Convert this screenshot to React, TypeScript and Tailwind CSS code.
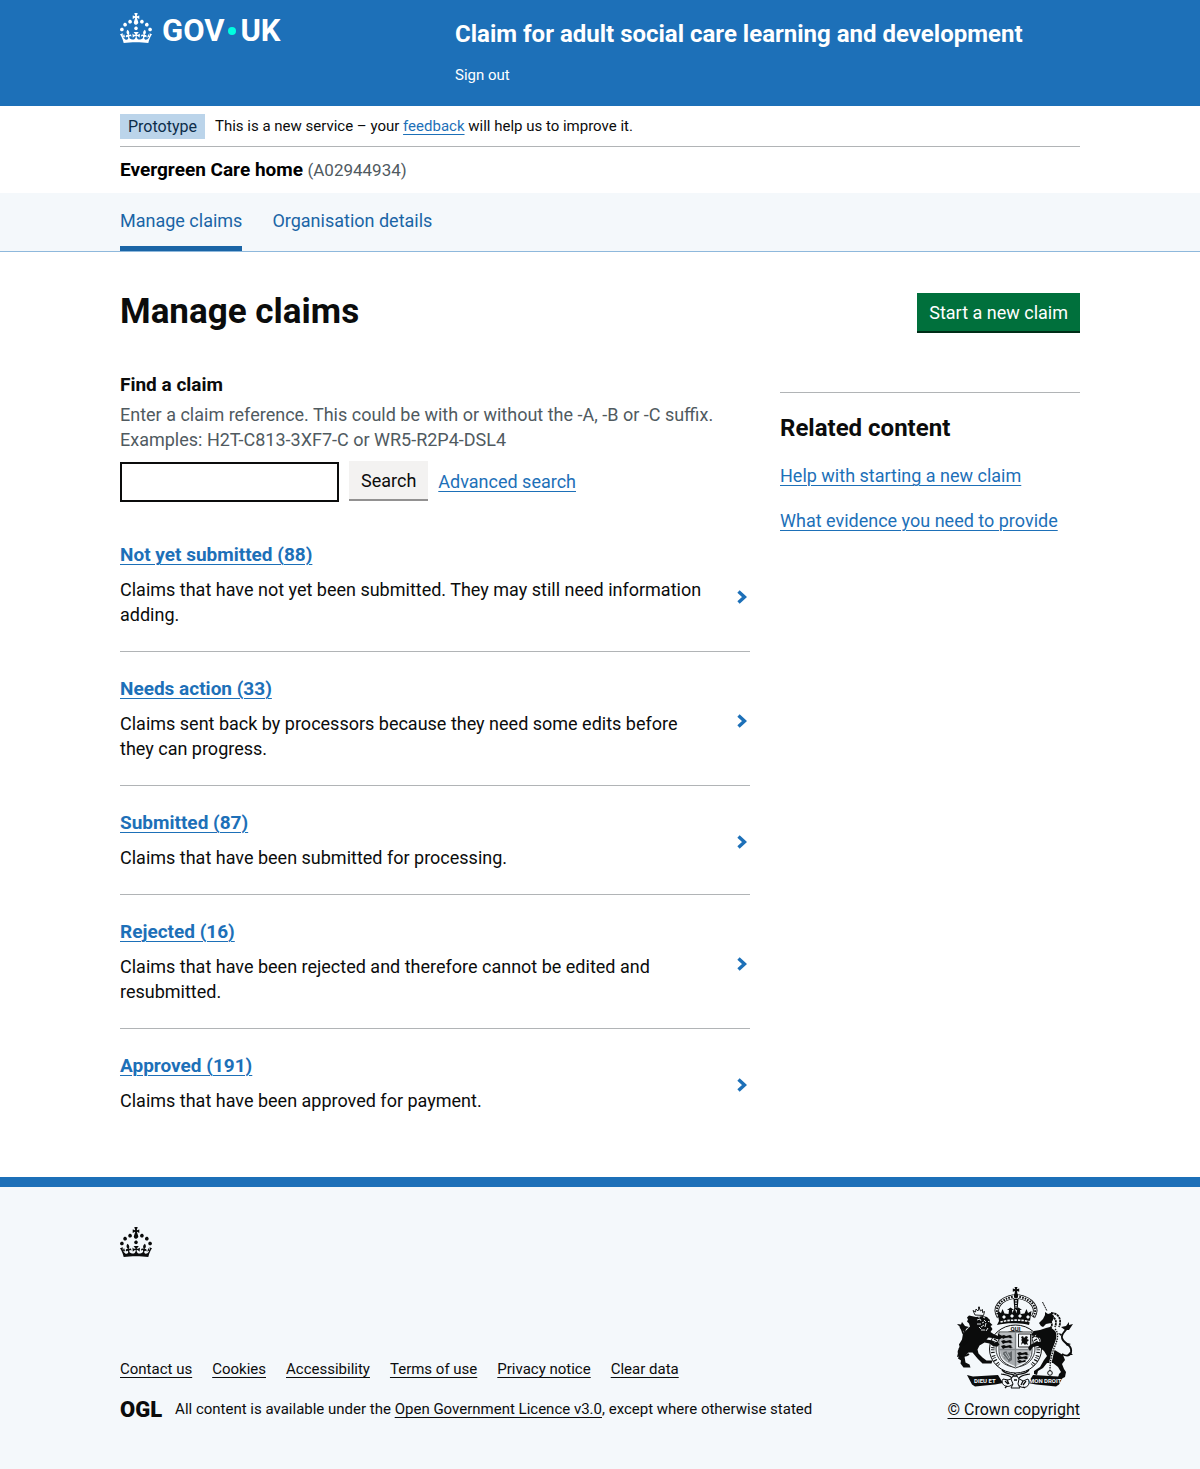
import React from "react";

const CROWN =
  "M22.6 10.4c-1 .4-2-.1-2.4-1-.4-.9.1-2 1-2.4.9-.4 2 .1 2.4 1s-.1 2-1 2.4m-5.9 6.7c-.9.4-2-.1-2.4-1-.4-.9.1-2 1-2.4.9-.4 2 .1 2.4 1s-.1 2-1 2.4m10.8-3.7c-1 .4-2-.1-2.4-1-.4-.9.1-2 1-2.4.9-.4 2 .1 2.4 1s0 2-1 2.4m3.3 4.8c-1 .4-2-.1-2.4-1-.4-.9.1-2 1-2.4.9-.4 2 .1 2.4 1s-.1 2-1 2.4M17 4.7l2.3 1.2V2.5l-2.3.7-.2-.2.9-3h-3.4l.9 3-.2.2c-.1.1-2.3-.7-2.3-.7v3.4L15 4.7c.1.1.1.2.2.2l-1.3 4c-.1.2-.1.4-.1.6 0 1.1.8 2 1.9 2.2h.7c1-.2 1.9-1.1 1.9-2.1 0-.2 0-.4-.1-.6l-1.3-4c-.1-.2 0-.2.1-.3m-7.6 5.7c.9.4 2-.1 2.4-1 .4-.9-.1-2-1-2.4-.9-.4-2 .1-2.4 1s0 2 1 2.4m-5 3c.9.4 2-.1 2.4-1 .4-.9-.1-2-1-2.4-.9-.4-2 .1-2.4 1s.1 2 1 2.4m-3.2 4.8c.9.4 2-.1 2.4-1 .4-.9-.1-2-1-2.4-.9-.4-2 .1-2.4 1s0 2 1 2.4m14.8 11c4.4 0 8.6.3 12.3.8 1.1-4.5 2.4-7 3.7-8.8l-2.5-.9c.2 1.3.3 1.9 0 2.7-.4-.4-.8-1.1-1.1-2.3l-1.2 4c.7-.5 1.3-.8 2-.9-1.1 2.5-2.6 3.1-3.5 3-1.1-.2-1.7-1.2-1.5-2.1.3-1.2 1.5-1.5 2.1-.1 1.1-2.3-.8-3-2-2.3 1.9-1.9 2.1-3.5.6-5.6-2.1 1.6-2.1 3.2-1.2 5.5-1.2-1.4-3.2-.6-2.5 1.6.9-1.4 2.1-.5 1.9.8-.2 1.1-1.7 2.1-3.5 1.9-2.7-.2-2.9-2.1-2.9-3.6.7-.1 1.9.5 2.9 1.9l.4-4.3c-1.1 1.1-2.1 1.4-3.2 1.4.4-1.2 2.1-3 2.1-3h-5.4s1.7 1.9 2.1 3c-1.1 0-2.1-.2-3.2-1.4l.4 4.3c1-1.4 2.2-2 2.9-1.9-.1 1.5-.2 3.4-2.9 3.6-1.9.2-3.4-.8-3.5-1.9-.2-1.3 1-2.2 1.9-.8.7-2.3-1.2-3-2.5-1.6.9-2.2.9-3.9-1.2-5.5-1.5 2-1.3 3.7.6 5.6-1.2-.7-3.1 0-2 2.3.6-1.4 1.8-1.1 2.1.1.2.9-.3 1.9-1.5 2.1-.9.2-2.4-.5-3.5-3 .6 0 1.2.3 2 .9l-1.2-4c-.3 1.1-.7 1.9-1.1 2.3-.3-.8-.2-1.4 0-2.7l-2.9.9C1.3 23 2.6 25.5 3.7 30c3.7-.5 7.9-.8 12.3-.8";

function Crown() {
  return (
    <svg viewBox="0 0 32 30" className="h-[30px] w-8 shrink-0" fill="currentColor" aria-hidden="true">
      <path fillRule="evenodd" clipRule="evenodd" d={CROWN} />
    </svg>
  );
}

const PAPER = "#f4f8fb";
const INK = "#0b0c0c";

function RoyalArms() {
  return (
    <svg viewBox="0 0 116 102" className="h-[102px] w-[116px]" fill={INK} stroke="none" aria-hidden="true">
      {/* crown */}
      <path d="M57.5 0h3l-.7 2.2 2.4-.7v3.2l-2.2-.6.5 3h-3l.5-3-2.2.6V1.5l2.4.7z" />
      <circle cx="59" cy="9" r="2.4" />
      <path d="M42 30C36 21 43 12 57 9.5M76 30C82 21 75 12 61 9.5" fill="none" stroke={INK} strokeWidth="4.5" />
      <path d="M42 30C36 21 43 12 57 9.5M76 30C82 21 75 12 61 9.5" fill="none" stroke={PAPER} strokeWidth="2.8" />
      <path d="M42 30C36 21 43 12 57 9.5M76 30C82 21 75 12 61 9.5" fill="none" stroke={INK} strokeWidth="2" strokeDasharray="1.6 1.2" />
      <path d="M56.5 12h5l-.8 10h-3.4z" />
      <path d="M59 13v8" stroke={PAPER} strokeWidth="1.5" strokeDasharray="1.5 1" />
      <path d="M42 34l-1.5-10 3.5 2 1.5-4 2 4.5 4 .5.5-4h-2l3.5-2.5 3.5 2.5h-2l.5 3 2-5 2 5 .5-3h-2l3.5-2.5 3.5 2.5h-2l.5 4 4-.5 2-4.500 1.5 4 3.5-2-1.5 10-1 4c-9-2.500-23-2.500-32 0z" />
      <path d="M45 30l2-2 2 2-2 2zM53 29l2-2 2 2-2 2zM61 29l2-2 2 2-2 2zM69 30l2-2 2 2-2 2z" fill={PAPER} />
      <path d="M43.5 35c9-2.5 22-2.5 31 0" fill="none" stroke={PAPER} strokeWidth="1.6" strokeDasharray="2.5 1" />

      {/* garter */}
      <ellipse cx="58.5" cy="62" rx="26" ry="24" fill={PAPER} stroke={INK} strokeWidth="1" />
      <path d="M44 45C34 54 33 68 42 77M73 45C83 54 84 68 75 77" fill="none" stroke={INK} strokeWidth="3.6" strokeDasharray="1 1.2 .8 1.6 1.2 2.5" transform="translate(0 1)" />
      <ellipse cx="58.5" cy="62" rx="19.5" ry="18" fill={PAPER} stroke={INK} strokeWidth=".8" />
      <text x="58.5" y="43.5" textAnchor="middle" fontSize="6" fontWeight="700">
        QUI
      </text>

      {/* shield */}
      <path d="M42 45h33v19c0 10-8 14-16.5 17C50 78 42 74 42 64z" fill={PAPER} stroke={INK} strokeWidth=".8" />
      <path d="M43 46h15v16H43z" fill="#b9bdc0" />
      <path d="M59 63h15c0 9-7 13-15 16z" fill="#b9bdc0" />
      <path d="M43 63h15v16C50 76 43 72 43 63z" fill="#a9adb0" />
      <path d="M58.5 45v35M42 62.5h33" stroke="#83888b" strokeWidth="1.4" />
      <path d="M44 49l3-1 2 1 4-1 2 1-1 1 2 1-3 .2-1-.7-4 .5-2 1zM44 54l3-1 2 1 4-1 2 1-1 1 2 1-3 .2-1-.7-4 .5-2 1zM44 59l3-1 2 1 4-1 2 1-1 1 2 1-3 .2-1-.7-4 .5-2 1z" />
      <path d="M60 66l3-1 2 1 4-1 2 1-1 1 2 1-3 .2-1-.7-4 .5-2 1zM60 70l3-1 2 1 4-1 2 1-1 1 1 1-3 .2-1-.7-4 .5-2 1zM60 74l3-1 2 1 3-1 1 1-1 1-3 .2-3 1z" />
      <path d="M61.5 47h12v13h-12z" fill={PAPER} stroke={INK} strokeWidth=".9" />
      <path d="M64 50l2-1 1 2 2-2 2 1-1 2 2 1-2 2 1 3-2-1-1 1-2-2-2 2 1-4-1-1 1-1z" />
      <path d="M46 66c1-2 4-2 6 0l3-2v9l-3 2-5-4z" fill="#606568" />
      <path d="M48 66l4 6M50 65l3 6M46 68l5 6" stroke={PAPER} strokeWidth=".6" />

      {/* lion */}
      <path d="M18 28l-2-4.5 2.5 1.5.5-3 2 2 1-3.5 1.5 3.5 2-1.500v3l2-1-1 4z" fill={PAPER} stroke={INK} strokeWidth=".9" />
      <circle cx="22" cy="20.5" r=".9" />
      <path d="M19 30l7-1 4 1 3 3-.5 2 3 3-2 1 2 3-2 3 3 2 4 2 1-2 3 1.5 1 2-3 2-3-.5-4-1-4-.5-2 2 6 1 2 2 3-1 2 3-2 2-4 0-4-3-5-1-5 3-2 4 1 4 4 4 4 3 6 0-1 3-9 0-5-5-5-6-4 0-4 4 1 6 4 2 1 3-7 0-3-4 .5-3-3-2 1-3-1-3 2-4-1-4 3-5 1-6 4-4 3-3-1-3-2-2 1-2-1-2 2-2z" />
      <path d="M20 33l3-1 1 2M20 37l4 0M24 40l3-2M27 33l2 2M29 36l-1 4M24 43l4 0M31 41l-2 3M26 30l2 1M21 30h2M31 34l1 1M22 40l2 2M25 36l2-1" fill="none" stroke={PAPER} strokeWidth=".9" />
      <path d="M12 67C7 71 0 68 2 63c1-4 6-6 8-9 2-5-2-5-4-8-1-3-1-5-3-6" fill="none" stroke={INK} strokeWidth="1.8" />
      <path d="M4 41l-4-4 4 .5L5 35l3 4 4 1-3 2-1 4zM7 56l-5 1 3 2zM1 66l-1 4 5-1z" />

      {/* unicorn */}
      <path d="M85.5 15l4.5 9" stroke={INK} strokeWidth="1" strokeDasharray="2 .5" />
      <path d="M84 39l-2-3L86 32l2-4 0-3 3 2 3-1 3 3-1 4-2 3-5 1-3 3z" />
      <path d="M94 26c8 0 11 7 8 14M94 29c5 2 6 6 4 11M93 34c3 3 2 5 0 8" fill="none" stroke={INK} strokeWidth="1.8" strokeDasharray="2.5 .6" />
      <path d="M83 43l6-2 4-1 4 3 4 3 0 7-3 6-2 3 5 3 5 3 2 5-3 4 2 5 2 3-1 5-4 2-3-1 1-4 2-2-3-5-5-4-6 0-4 5-5 3-1 4-3-1 0-3 6-4 4-7 3-4-3-5-6-5-5 1-3 4-2-3 2-3 6-3 5 0-1-4-5-1z" />
      <path d="M83 43l-6 1-3 4 3 1 6-3z" />
      <path d="M98 42c6 6 0 16-2 22-2 7-3 10-3 20" fill="none" stroke={PAPER} strokeWidth="2.4" />
      <path d="M98 42c6 6 0 16-2 22-2 7-3 10-3 20" fill="none" stroke={INK} strokeWidth="1.300" strokeDasharray="1.5 1" />
      <circle cx="93" cy="86" r="2.3" fill="none" stroke={INK} strokeWidth="1" />
      <path d="M105 67c7 4 10 0 9-5s-8-6-9-11c-1-4 3-6 5-10" fill="none" stroke={INK} strokeWidth="1.8" />
      <path d="M108 43l-4-3 5-1 3-4 0 3 4-1-4 6zM107 55l7 2-4 2zM113 65l3 3-6 0zM104 49l-3-3 4 1z" />

      {/* scrolls */}
      <path d="M10 88l6 1.5L41 88l5 8-8 1.500-20 2-3-2z" />
      <path d="M107 88l-6 1.5L76 88l-5 8 8 1.500 20 2 3-2z" />
      <g fill={PAPER} fontSize="6" fontWeight="700">
        <text x="17" y="96">
          DIEU ET
        </text>
        <text x="72" y="96">
          MON DROIT
        </text>
      </g>

      {/* knot and foliage */}
      <path d="M45 83c5 6 9 2 13 6 5-4 9 0 14-6M44 87c5 1 8 1 11 4M73 87c-5 1-8 1-11 4" fill="none" stroke={INK} strokeWidth="1.2" />
      <path d="M46 92c-3 4 2 9 7 7l5-3 6 4c6 2 10-3 7-8l-5 2-7-4-8 3z" fill={PAPER} stroke={INK} strokeWidth="1" />
      <path d="M54 92l4-6 4 6-1 5 2 4h-9l2-4z" fill={PAPER} stroke={INK} strokeWidth="1" />
      <path d="M48 94l3 3M50 93l2 4M66 94l-2 4M69 94l-3 4M56 89h4M57 93l3 0M50 99l-2 2M66 100l2 1" stroke={INK} strokeWidth="1.3" />
    </svg>
  );
}

const link = "underline decoration-1 underline-offset-[3px] hover:decoration-[3px]";

const claims = [
  { title: "Not yet submitted (88)", text: "Claims that have not yet been submitted. They may still need information adding." },
  { title: "Needs action (33)", text: "Claims sent back by processors because they need some edits before they can progress." },
  { title: "Submitted (87)", text: "Claims that have been submitted for processing." },
  { title: "Rejected (16)", text: "Claims that have been rejected and therefore cannot be edited and resubmitted." },
  { title: "Approved (191)", text: "Claims that have been approved for payment." },
];

const footerLinks = ["Contact us", "Cookies", "Accessibility", "Terms of use", "Privacy notice", "Clear data"];

function Container({ className = "", children }: { className?: string; children: React.ReactNode }) {
  return (
    <div className="px-4">
      <div className={`mx-auto max-w-[960px] ${className}`}>{children}</div>
    </div>
  );
}

export default function App() {
  return (
    <div className="bg-white font-['Roboto',sans-serif] text-[18px] leading-[25px] text-[#0b0c0c]">
      <header className="bg-[#1d70b8] text-white">
        <Container className="flex flex-wrap pb-[18px] pt-3">
          <a href="#" aria-label="GOV.UK" className="flex w-[335px] items-start">
            <span className="pt-px">
              <Crown />
            </span>
            <span className="ml-[10px] flex items-center text-[31px] font-bold leading-[38px]">
              <span>GOV</span>
              <span className="mx-1 size-[8px] rounded-full bg-[#00ffe0]" />
              <span>UK</span>
            </span>
          </a>
          <div>
            <a href="#" className="block pt-[7px] text-[24px] font-bold leading-[30px]">
              Claim for adult social care learning and development
            </a>
            <a href="#" className="mt-[14px] inline-block text-[15px]">
              Sign out
            </a>
          </div>
        </Container>
      </header>

      <Container>
        <div className="flex items-center gap-[10px] border-b border-[#b1b4b6] pb-[7px] pt-2 text-[15px]">
          <strong className="bg-[#bbd4ea] px-2 text-[16px] font-normal text-[#0c2d4a]">Prototype</strong>
          <span>
            This is a new service – your{" "}
            <a href="#" className={`text-[#1d70b8] ${link}`}>
              feedback
            </a>{" "}
            will help us to improve it.
          </span>
        </div>
        <p className="pb-[10px] pt-[10px]">
          <strong className="text-[19px] font-bold text-black">Evergreen Care home</strong>{" "}
          <span className="text-[17px] text-[#505a5f]">(A02944934)</span>
        </p>
      </Container>

      <nav aria-label="Main" className="border-b border-[#8eb8dc] bg-[#f4f8fb]">
        <Container className="flex gap-[30px] text-[#1a65a6]">
          <a href="#" aria-current="page" className="border-b-[5px] border-[#1a65a6] pb-[13px] pt-[15px]">
            Manage claims
          </a>
          <a href="#" className="pb-[18px] pt-[15px]">
            Organisation details
          </a>
        </Container>
      </nav>

      <main>
        <Container className="pb-16 pt-10">
          <div className="flex items-center justify-between">
            <h1 className="text-[35px] font-bold leading-[40px]">Manage claims</h1>
            <button type="button" className="h-[38px] bg-[#00703c] px-3 text-white shadow-[0_2px_0_#002d18]">
              Start a new claim
            </button>
          </div>

          <div className="mt-10 flex gap-[30px]">
            <div className="min-w-0 flex-1">
              <form onSubmit={(e) => e.preventDefault()}>
                <label htmlFor="claim" className="block text-[19px] font-bold">
                  Find a claim
                </label>
                <p id="claim-hint" className="mt-[5px] text-[#505a5f]">
                  Enter a claim reference. This could be with or without the -A, -B or -C suffix.
                  <br />
                  Examples: H2T-C813-3XF7-C or WR5-R2P4-DSL4
                </p>
                <div className="mt-[9px] flex items-center gap-[10px]">
                  <input
                    id="claim"
                    type="text"
                    aria-describedby="claim-hint"
                    className="h-10 w-[219px] border-2 border-[#0b0c0c] bg-white px-1"
                  />
                  <button type="submit" className="mb-[3px] h-[38px] bg-[#f3f2f1] px-3 shadow-[0_2px_0_#929191]">
                    Search
                  </button>
                  <a href="#" className={`text-[#1d70b8] ${link}`}>
                    Advanced search
                  </a>
                </div>
              </form>

              <ul className="mt-4">
                {claims.map((c) => (
                  <li key={c.title} className="group flex items-center justify-between border-b border-[#b1b4b6] py-6 last:border-b-0 last:pb-0">
                    <div className="max-w-[594px]">
                      <h2 className="text-[19px] font-bold">
                        <a href="#" className={`text-[#1d70b8] ${link}`}>
                          {c.title}
                        </a>
                      </h2>
                      <p className="mt-[10px]">{c.text}</p>
                    </div>
                    <svg
                      viewBox="0 0 10 14"
                      className="mr-[3px] mt-1 h-[14px] w-[10px] shrink-0 group-first:mt-6"
                      fill="none"
                      stroke="#1d70b8"
                      strokeWidth="3.4"
                      aria-hidden="true"
                    >
                      <path d="M1.5 1.5L7.5 7l-6 5.5" />
                    </svg>
                  </li>
                ))}
              </ul>
            </div>

            <aside className="mt-5 w-[300px] self-start border-t border-[#b1b4b6] pt-5">
              <h2 className="text-[24px] font-bold leading-[30px]">Related content</h2>
              <ul className="mt-5 flex flex-col gap-5">
                <li>
                  <a href="#" className={`text-[#1d70b8] ${link}`}>
                    Help with starting a new claim
                  </a>
                </li>
                <li>
                  <a href="#" className={`text-[#1d70b8] ${link}`}>
                    What evidence you need to provide
                  </a>
                </li>
              </ul>
            </aside>
          </div>
        </Container>
      </main>

      <footer className="border-t-[10px] border-[#1d70b8] bg-[#f4f8fb] text-[15px]">
        <Container className="pb-12 pt-10">
          <Crown />
          <div className="mt-[30px] flex items-end justify-between">
            <div>
              <ul className="flex flex-wrap gap-x-5">
                {footerLinks.map((l) => (
                  <li key={l}>
                    <a href="#" className={link}>
                      {l}
                    </a>
                  </li>
                ))}
              </ul>
              <div className="mt-[15px] flex items-center gap-[13px]">
                <span className="text-[22px] font-black leading-[25px]">OGL</span>
                <span>
                  All content is available under the{" "}
                  <a href="#" className={link}>
                    Open Government Licence v3.0
                  </a>
                  , except where otherwise stated
                </span>
              </div>
            </div>
            <a href="#" className={`flex flex-col items-end gap-2 text-right text-[16px] ${link}`}>
              <span className="pr-[7px] no-underline">
                <RoyalArms />
              </span>
              <span>© Crown copyright</span>
            </a>
          </div>
        </Container>
      </footer>
    </div>
  );
}
